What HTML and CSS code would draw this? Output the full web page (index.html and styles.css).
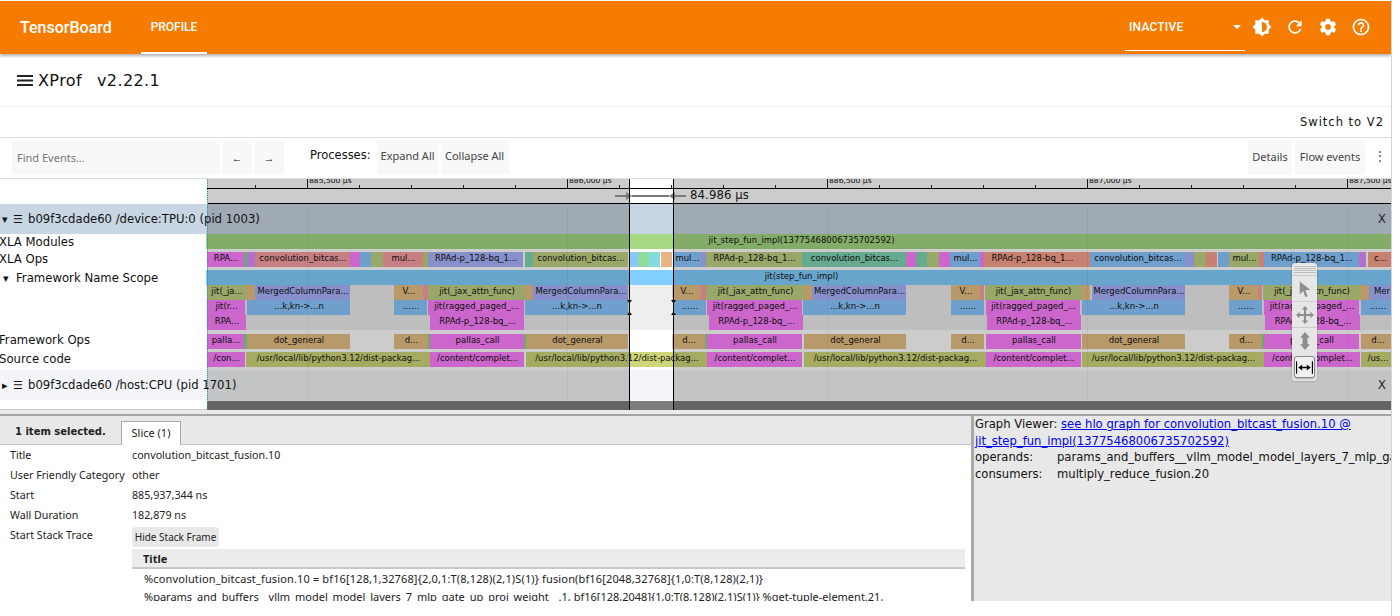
FILE: index.html
```html
<!DOCTYPE html>
<html lang="en">
<head>
<meta charset="utf-8">
<title>XProf</title>
<link rel="stylesheet" href="styles.css">
</head>
<body>
<div class="app">
  <header class="topbar">
    <span class="brand">TensorBoard</span>
    <span class="tab-active">PROFILE</span>
    <div class="run-select"><span>INACTIVE</span><i class="caret"></i></div>
    <div class="top-icons">
      <svg viewBox="0 0 24 24"><path fill-rule="evenodd" d="M20 15.31L23.31 12 20 8.69V4h-4.69L12 .69 8.69 4H4v4.69L.69 12 4 15.31V20h4.69L12 23.31 15.31 20H20v-4.69zM12 18V6c3.31 0 6 2.69 6 6s-2.69 6-6 6z"/></svg>
      <svg viewBox="0 0 24 24"><path d="M17.65 6.35C16.2 4.9 14.21 4 12 4c-4.42 0-7.99 3.58-7.99 8s3.57 8 7.99 8c3.73 0 6.84-2.55 7.73-6h-2.08c-.82 2.33-3.04 4-5.65 4-3.31 0-6-2.69-6-6s2.69-6 6-6c1.66 0 3.14.69 4.22 1.78L13 11h7V4l-2.35 2.35z"/></svg>
      <svg viewBox="0 0 24 24"><path d="M19.43 12.98c.04-.32.07-.64.07-.98s-.03-.66-.07-.98l2.11-1.65c.19-.15.24-.42.12-.64l-2-3.46c-.12-.22-.39-.3-.61-.22l-2.49 1c-.52-.4-1.08-.73-1.69-.98l-.38-2.65C14.46 2.18 14.25 2 14 2h-4c-.25 0-.46.18-.49.42l-.38 2.65c-.61.25-1.17.59-1.69.98l-2.49-1c-.23-.09-.49 0-.61.22l-2 3.46c-.13.22-.07.49.12.64l2.11 1.65c-.04.32-.07.65-.07.98s.03.66.07.98l-2.11 1.65c-.19.15-.24.42-.12.64l2 3.46c.12.22.39.3.61.22l2.49-1c.52.4 1.08.73 1.69.98l.38 2.65c.03.24.24.42.49.42h4c.25 0 .46-.18.49-.42l.38-2.65c.61-.25 1.17-.59 1.69-.98l2.49 1c.23.09.49 0 .61-.22l2-3.46c.12-.22.07-.49-.12-.64l-2.11-1.65zM12 15.5c-1.93 0-3.5-1.57-3.5-3.5s1.57-3.5 3.5-3.5 3.5 1.57 3.5 3.5-1.57 3.5-3.5 3.5z"/></svg>
      <svg viewBox="0 0 24 24"><path d="M11 18h2v-2h-2v2zm1-16C6.48 2 2 6.48 2 12s4.48 10 10 10 10-4.48 10-10S17.52 2 12 2zm0 18c-4.41 0-8-3.59-8-8s3.59-8 8-8 8 3.59 8 8-3.59 8-8 8zm0-14c-2.21 0-4 1.79-4 4h2c0-1.1.9-2 2-2s2 .9 2 2c0 2-3 1.75-3 5h2c0-2.25 3-2.5 3-5 0-2.21-1.79-4-4-4z"/></svg>
    </div>
  </header>

  <div class="title-row">
    <svg class="menu" viewBox="0 0 16 11"><path d="M0 0h16v2H0zM0 4.5h16v2H0zM0 9h16v2H0z"/></svg>
    <span class="app-name">XProf</span><span class="app-version">v2.22.1</span>
  </div>
  <div class="switch-row"><span>Switch to V2</span></div>

  <div class="tools">
    <div class="find">Find Events...</div>
    <div class="tbtn nav">←</div>
    <div class="tbtn nav">→</div>
    <span class="procs">Processes:</span>
    <div class="tbtn expand">Expand All</div>
    <div class="tbtn collapse">Collapse All</div>
    <div class="tbtn details">Details</div>
    <div class="tbtn flow">Flow events</div>
    <span class="more">⋮</span>
  </div>

  <section class="timeline">
    <div class="row ruler-row">
      <div class="lbl"></div>
      <div class="track ruler">
        <span class="rl" style="left:102px">885,500 µs</span>
        <span class="rl" style="left:362px">886,000 µs</span>
        <span class="rl" style="left:622px">886,500 µs</span>
        <span class="rl" style="left:882px">887,000 µs</span>
        <span class="rl" style="left:1142px">887,500 µs</span>
      </div>
    </div>
    <div class="row measure-row"><div class="lbl"></div><div class="track measure"></div></div>

    <div class="row proc">
      <div class="lbl plabel sel"><span class="tri">▾</span><span class="ham">☰</span><span class="pname">b09f3cdade60 /device:TPU:0 (pid 1003)</span></div>
      <div class="track ptrack sel"><span class="close">X</span></div>
    </div>

    <div class="row r18">
      <div class="lbl tl">XLA Modules</div>
      <div class="track">
        <div class="lvl"><div class="s mod" style="left:0;width:1190px">jit_step_fun_impl(13775468006735702592)</div></div>
      </div>
    </div>

    <div class="row r18">
      <div class="lbl tl tl-ops">XLA Ops</div>
      <div class="track">
        <div class="lvl">
          <div class="s mag" style="left:1px;width:37px">RPA...</div>
          <div class="s grn" style="left:38px;width:3px"></div>
          <div class="s pur2" style="left:41px;width:8px"></div>
          <div class="s pnk" style="left:49px;width:95px">convolution_bitcas...</div>
          <div class="s mag" style="left:144px;width:10px"></div>
          <div class="s blu" style="left:154px;width:11px"></div>
          <div class="s oli" style="left:165px;width:12px"></div>
          <div class="s pnk" style="left:177px;width:40px">mul...</div>
          <div class="s oli" style="left:217px;width:5px"></div>
          <div class="s pur" style="left:222px;width:95px">RPAd-p_128-bq_1...</div>
          <div class="s tea" style="left:319px;width:8px"></div>
          <div class="s oli" style="left:327px;width:95px">convolution_bitcas...</div>
          <div class="s blu" style="left:423px;width:9px"></div>
          <div class="s gr2" style="left:432px;width:11px"></div>
          <div class="s cya" style="left:443px;width:11px"></div>
          <div class="s org" style="left:455px;width:11px"></div>
          <div class="s blu" style="left:467px;width:28px">mul...</div>
          <div class="s pur" style="left:495px;width:5px"></div>
          <div class="s oli" style="left:500px;width:96px">RPAd-p_128-bq_1...</div>
          <div class="s tea" style="left:596px;width:104px">convolution_bitcas...</div>
          <div class="s mag" style="left:700px;width:10px"></div>
          <div class="s tea" style="left:710px;width:11px"></div>
          <div class="s oli" style="left:721px;width:12px"></div>
          <div class="s mag" style="left:733px;width:11px"></div>
          <div class="s blu" style="left:744px;width:30px">mul...</div>
          <div class="s mag" style="left:774px;width:4px"></div>
          <div class="s sal" style="left:778px;width:96px">RPAd-p_128-bq_1...</div>
          <div class="s sal" style="left:874px;width:10px"></div>
          <div class="s blu" style="left:884px;width:95px">convolution_bitcas...</div>
          <div class="s pur" style="left:979px;width:9px"></div>
          <div class="s oli" style="left:988px;width:12px"></div>
          <div class="s sal" style="left:1000px;width:11px"></div>
          <div class="s blu" style="left:1012px;width:11px"></div>
          <div class="s oli" style="left:1023px;width:30px">mul...</div>
          <div class="s sal" style="left:1053px;width:5px"></div>
          <div class="s blu" style="left:1058px;width:95px">RPAd-p_128-bq_1...</div>
          <div class="s pur2" style="left:1153px;width:7px"></div>
          <div class="s sal" style="left:1162px;width:24px">c...</div>
        </div>
      </div>
    </div>

    <div class="row scope">
      <div class="lbl tl"><span class="tri tri-scope">▾</span>Framework Name Scope</div>
      <div class="track">
        <div class="lvl"><div class="s sco" style="left:0;width:1190px">jit(step_fun_impl)</div></div>
        <div class="lvl">
          <div class="s oli" style="left:1px;width:39px">jit(_ja...</div>
          <div class="s tan" style="left:40px;width:9px"></div>
          <div class="s pur" style="left:49px;width:95px">MergedColumnPara...</div>
          <div class="s tan" style="left:188px;width:29px">V...</div>
          <div class="s pnk" style="left:217px;width:5px"></div>
          <div class="s oli" style="left:222px;width:97px">jit(_jax_attn_func)</div>
          <div class="s tan" style="left:319px;width:8px"></div>
          <div class="s pur" style="left:327px;width:95px">MergedColumnPara...</div>
          <div class="s tan" style="left:466px;width:29px">V...</div>
          <div class="s pnk" style="left:495px;width:5px"></div>
          <div class="s oli" style="left:500px;width:98px">jit(_jax_attn_func)</div>
          <div class="s tan" style="left:598px;width:8px"></div>
          <div class="s pur" style="left:606px;width:94px">MergedColumnPara...</div>
          <div class="s tan" style="left:745px;width:29px">V...</div>
          <div class="s pnk" style="left:774px;width:4px"></div>
          <div class="s oli" style="left:779px;width:96px">jit(_jax_attn_func)</div>
          <div class="s tan" style="left:875px;width:9px"></div>
          <div class="s pur" style="left:886px;width:93px">MergedColumnPara...</div>
          <div class="s tan" style="left:1023px;width:29px">V...</div>
          <div class="s pnk" style="left:1052px;width:4px"></div>
          <div class="s oli" style="left:1057px;width:97px">jit(_jax_attn_func)</div>
          <div class="s tan" style="left:1154px;width:9px"></div>
          <div class="s pur" style="left:1163px;width:25px">Mer</div>
        </div>
        <div class="lvl">
          <div class="s mag" style="left:1px;width:38px">jit(r...</div>
          <div class="s blu" style="left:41px;width:103px">...k,kn-&gt;...n</div>
          <div class="s blu" style="left:188px;width:33px">......</div>
          <div class="s mag" style="left:222px;width:96px">jit(ragged_paged_...</div>
          <div class="s blu" style="left:319px;width:103px">...k,kn-&gt;...n</div>
          <div class="s blu" style="left:467px;width:33px">......</div>
          <div class="s mag" style="left:501px;width:95px">jit(ragged_paged_...</div>
          <div class="s blu" style="left:597px;width:103px">...k,kn-&gt;...n</div>
          <div class="s blu" style="left:745px;width:33px">......</div>
          <div class="s mag" style="left:780px;width:94px">jit(ragged_paged_...</div>
          <div class="s blu" style="left:876px;width:103px">...k,kn-&gt;...n</div>
          <div class="s blu" style="left:1023px;width:33px">......</div>
          <div class="s mag" style="left:1058px;width:95px">jit(ragged_paged_...</div>
          <div class="s blu" style="left:1155px;width:33px">......</div>
        </div>
        <div class="lvl">
          <div class="s mag" style="left:1px;width:39px">RPA...</div>
          <div class="s mag" style="left:224px;width:94px">RPAd-p_128-bq_...</div>
          <div class="s mag" style="left:503px;width:94px">RPAd-p_128-bq_...</div>
          <div class="s mag" style="left:781px;width:94px">RPAd-p_128-bq_...</div>
          <div class="s mag" style="left:1059px;width:95px">RPAd-p_128-bq_...</div>
        </div>
      </div>
    </div>

    <div class="row r22">
      <div class="lbl tl tl-fw">Framework Ops</div>
      <div class="track pad4">
        <div class="lvl">
          <div class="s mag" style="left:1px;width:37px">palla...</div>
          <div class="s grn" style="left:38px;width:3px"></div>
          <div class="s tan" style="left:41px;width:103px">dot_general</div>
          <div class="s tan" style="left:188px;width:34px">d...</div>
          <div class="s grn" style="left:222px;width:2px"></div>
          <div class="s mag" style="left:224px;width:94px">pallas_call</div>
          <div class="s grn" style="left:318px;width:2px"></div>
          <div class="s tan" style="left:320px;width:102px">dot_general</div>
          <div class="s tan" style="left:466px;width:33px">d...</div>
          <div class="s grn" style="left:499px;width:2px"></div>
          <div class="s mag" style="left:501px;width:95px">pallas_call</div>
          <div class="s tan" style="left:598px;width:102px">dot_general</div>
          <div class="s tan" style="left:745px;width:33px">d...</div>
          <div class="s mag" style="left:780px;width:95px">pallas_call</div>
          <div class="s tan" style="left:876px;width:103px">dot_general</div>
          <div class="s tan" style="left:1023px;width:33px">d...</div>
          <div class="s grn" style="left:1056px;width:2px"></div>
          <div class="s mag" style="left:1058px;width:95px">pallas_call</div>
          <div class="s tan" style="left:1155px;width:33px">d...</div>
        </div>
      </div>
    </div>

    <div class="row r18">
      <div class="lbl tl tl-src">Source code</div>
      <div class="track">
        <div class="lvl">
          <div class="s mag" style="left:1px;width:38px">/con...</div>
          <div class="s src" style="left:40px;width:184px">/usr/local/lib/python3.12/dist-packag...</div>
          <div class="s mag" style="left:224px;width:94px">/content/complet...</div>
          <div class="s src" style="left:320px;width:181px">/usr/local/lib/python3.12/dist-packag...</div>
          <div class="s mag" style="left:501px;width:95px">/content/complet...</div>
          <div class="s src" style="left:598px;width:182px">/usr/local/lib/python3.12/dist-packag...</div>
          <div class="s mag" style="left:780px;width:95px">/content/complet...</div>
          <div class="s src" style="left:876px;width:182px">/usr/local/lib/python3.12/dist-packag...</div>
          <div class="s mag" style="left:1058px;width:96px">/content/complet...</div>
          <div class="s src" style="left:1155px;width:33px">/us...</div>
        </div>
      </div>
    </div>

    <div class="row proc">
      <div class="lbl plabel host"><span class="tri">▸</span><span class="ham">☰</span><span class="pname">b09f3cdade60 /host:CPU (pid 1701)</span></div>
      <div class="track ptrack host"><span class="close">X</span></div>
    </div>
    <div class="row tail"><div class="lbl"></div><div class="track"><div class="minimap"></div></div></div>

    <div class="grid"></div>
    <div class="dim dim-l"></div>
    <div class="dim dim-r"></div>
    <div class="dotted"></div>
    <div class="sel-line sel-a"></div>
    <div class="sel-line sel-b"></div>
    <svg class="arrows" viewBox="0 0 72 10"><path d="M0 4h11V1l6 4-6 4V6H0zM71 4H60V1l-6 4 6 4V6h11zM17 4h37v2H17z"/></svg>
    <span class="span-text">84.986 µs</span>
    <svg class="caps cap-a" viewBox="0 0 5 15"><path d="M0 0h5L2.900 3v9L5 15H0l2.100-3V3z"/></svg>
    <svg class="caps cap-b" viewBox="0 0 5 15"><path d="M0 0h5L2.900 3v9L5 15H0l2.100-3V3z"/></svg>

    <div class="modes">
      <div class="handle"></div>
      <div class="mode"><svg viewBox="0 0 20 24"><path d="M3 2l14 11-6.500 .5 3 8-3 1-3-8L3 19z"/></svg></div>
      <div class="mode"><svg viewBox="0 0 20 20"><path d="M10 0l3.500 4H11.200v4.800H16V6.500l4 3.500-4 3.500v-2.300h-4.800V16h2.300L10 20l-3.500-4h2.300v-4.800H4v2.300L0 10l4-3.500v2.300h4.800V4H6.500z"/></svg></div>
      <div class="mode"><svg viewBox="0 0 14 22"><path d="M7 0l6 7H10v8h3l-6 7-6-7h3V7H1z"/></svg></div>
      <div class="mode active"><svg viewBox="0 0 22 16"><path d="M0 0h1.500v16H0zM20.500 0H22v16h-1.500zM3 8l5-4v3h6V4l5 4-5 4V9H8v3z"/></svg></div>
    </div>
  </section>

  <div class="sep"></div>

  <section class="bottom">
    <div class="analysis">
      <div class="ahead">
        <b class="count">1 item selected.</b>
        <span class="slice-tab">Slice (1)</span>
      </div>
      <div class="props">
        <div class="prop"><span class="k">Title</span><span class="v">convolution_bitcast_fusion.10</span></div>
        <div class="prop"><span class="k">User Friendly Category</span><span class="v">other</span></div>
        <div class="prop"><span class="k">Start</span><span class="v">885,937,344 ns</span></div>
        <div class="prop"><span class="k">Wall Duration</span><span class="v">182,879 ns</span></div>
        <div class="prop"><span class="k">Start Stack Trace</span><span class="v"><span class="hide-btn">Hide Stack Frame</span></span></div>
        <div class="stack">
          <div class="stack-h">Title</div>
          <div class="stack-l first">%convolution_bitcast_fusion.10 = bf16[128,1,32768]{2,0,1:T(8,128)(2,1)S(1)} fusion(bf16[2048,32768]{1,0:T(8,128)(2,1)}</div>
          <div class="stack-l">%params_and_buffers__vllm_model_model_layers_7_mlp_gate_up_proj_weight__.1, bf16[128,2048]{1,0:T(8,128)(2,1)S(1)} %get-tuple-element.21,</div>
        </div>
      </div>
    </div>
    <aside class="graph">
      <div class="gline">Graph Viewer: <a href="#">see hlo graph for convolution_bitcast_fusion.10 @ jit_step_fun_impl(13775468006735702592)</a></div>
      <div class="gkv"><span>operands:</span><span>params_and_buffers__vllm_model_model_layers_7_mlp_gate_up_proj_weight__.1</span></div>
      <div class="gkv"><span>consumers:</span><span>multiply_reduce_fusion.20</span></div>
    </aside>
  </section>
</div>
</body>
</html>
```

FILE: styles.css
```css
* { box-sizing: border-box; }
html, body { margin: 0; padding: 0; background: #fff; overflow: hidden; }
body { font-family: "DejaVu Sans", sans-serif; color: #111; height: 616px; }
.app { width: 1392px; height: 616px; border-right: 1px solid #d4d4d4; padding-top: 1px; display: flex; flex-direction: column; overflow: hidden; }

/* top bar */
.topbar { height: 53px; flex: none; background: #f57c00; color: #fff; display: flex; align-items: center; font-family: Roboto, sans-serif; box-shadow: 0 2px 3px rgba(0,0,0,.3); position: relative; z-index: 5; }
.brand { margin-left: 20px; font-size: 16px; font-weight: 500; width: 121px; }
.tab-active { width: 66px; height: 53px; line-height: 52px; text-align: center; font-size: 12px; font-weight: 500; border-bottom: 2px solid #fff; }
.run-select { margin-left: auto; width: 120px; height: 50px; padding: 2px 4px 0; display: flex; align-items: center; justify-content: space-between; font-size: 12px; font-weight: 500; letter-spacing: .2px; border-bottom: 1px solid #fff; align-self: flex-start; line-height: 50px; }
.caret { width: 0; height: 0; border-left: 4px solid transparent; border-right: 4px solid transparent; border-top: 4px solid #fff; }
.top-icons { display: flex; gap: 13px; margin-left: 7px; margin-right: 20px; align-self: flex-start; margin-top: 16px; }
.top-icons svg { width: 20px; height: 20px; fill: #fff; display: block; }

/* title rows */
.title-row { height: 53px; flex: none; border-bottom: 1px solid #f0f0f0; display: flex; align-items: center; padding-left: 17px; font-size: 16px; letter-spacing: .4px; padding-top: 1px; }
.menu { width: 16px; height: 11px; fill: #222; margin-right: 5px; }
.app-version { margin-left: 15px; }
.switch-row { height: 31px; flex: none; border-bottom: 1px solid #ddd; display: flex; align-items: center; justify-content: flex-end; padding-right: 7px; font-size: 11.500px; letter-spacing: 1px; }

.tools { height: 41px; flex: none; display: flex; align-items: flex-start; font-family: "Noto Sans", sans-serif; font-size: 11px; color: #444; border-bottom: 1px solid #ddd; }
.find { width: 208px; height: 33px; margin: 3px 0 0 12px; background: #f8f8f8; color: #777; line-height: 33px; padding-left: 5px; }
.tbtn { background: #f8f8f8; height: 34px; margin-top: 2px; line-height: 31px; text-align: center; }
.nav { width: 30px; margin: 3px 0 0 2px; height: 33px; color: #222; line-height: 33px; }
.procs { margin: 9px 0 0 26px; font-family: "DejaVu Sans", sans-serif; font-size: 11.500px; line-height: 16px; color: #111; }
.expand { width: 62px; margin-left: 6px; }
.collapse { width: 68px; margin-left: 2px; }
.details { width: 44px; margin-left: auto; height: 35px; line-height: 33px; }
.flow { width: 70px; margin-left: 3px; height: 35px; line-height: 33px; }
.more { width: 26px; margin-top: 10px; padding-left: 4px; text-align: center; font-size: 12px; line-height: 16px; }

/* timeline */
.timeline { position: relative; height: 231px; flex: none; overflow: hidden; }
.row { display: flex; }
.lbl { width: 207px; flex: none; position: relative; z-index: 3; white-space: nowrap; }
.track { flex: 1; position: relative; min-width: 0; }
.ruler-row { height: 10px; }
.ruler { border-bottom: 1px solid #000; overflow: hidden; background:
  linear-gradient(90deg, transparent 100px, #222 100px 101px, transparent 101px) 0 0 / 260px 100% repeat-x,
  linear-gradient(90deg, transparent 48px, #222 48px 49px, transparent 49px) 0 100% / 52px 3px repeat-x; }
.rl { position: absolute; top: -3px; font-size: 7.600px; line-height: 10px; color: #111; white-space: nowrap; }
.measure-row { height: 15px; }
.measure { border-bottom: 1px solid #000; }
.proc { height: 30px; }
.plabel { display: flex; align-items: center; font-size: 11.650px; }
.tri { font-size: 11px; width: 13px; padding-left: 2px; flex: none; }
.ham { width: 15px; flex: none; font-size: 11px; }
.sel { background: #c8d5e3; }
.host { background: #f3f5f8; }
.ptrack { display: flex; align-items: center; justify-content: flex-end; padding-right: 5px; }
.close { font-size: 12px; color: #333; }
.r18 { height: 18px; }
.r22 { height: 22px; }
.scope { height: 60px; }
.scope .track { background: #eee; }
.pad4 { padding-top: 4px; }
.tl { font-size: 11.700px; line-height: 14px; margin-left: -1px; padding-top: 1px; }
.tl-ops { margin-top: -1px; }
.tl-fw { padding-top: 3px; }
.tl-src { padding-top: 0; }
.tri-scope { display: inline-block; padding-left: 4px; width: 17px; }
.lvl { position: relative; height: 15px; }
.s { position: absolute; top: 0; height: 15px; font-size: 8.500px; line-height: 12px; text-align: center; text-indent: 1px; overflow: hidden; white-space: nowrap; color: #111; }
.mod { background: #a6d884; }
.sco { background: #82cfff; }
.mag { background: #ff80ff; }
.pnk { background: #fb9fa6; }
.oli { background: #c0d284; }
.blu { background: #8bc7ff; }
.pur { background: #aab4ff; }
.pur2 { background: #dc8cff; }
.tea { background: #80d5b4; }
.grn { background: #80d890; }
.gr2 { background: #90dc9c; }
.cya { background: #80dce0; }
.org { background: #e8b482; }
.tan { background: #e6c085; }
.sal { background: #faa08c; }
.src { background: #cfd67a; }
.tail { height: 10px; }
.tail .lbl { border-bottom: 1px solid #ccc; }
.minimap { height: 9px; margin-top: 1px; background: #7d7d7d; }

/* overlays on the timeline canvas */
.grid { position: absolute; left: 207px; right: 0; top: 25px; height: 196px; z-index: 1; background: linear-gradient(90deg, transparent 100px, rgba(0,0,0,.05) 100px 101px, transparent 101px) 0 0 / 260px 100% repeat-x; }
.dim { position: absolute; top: 0; bottom: 0; background: rgba(0,0,0,.2); z-index: 2; }
.dim-l { left: 207px; width: 423px; }
.dim-r { left: 673px; right: 0; }
.dotted { position: absolute; left: 207px; top: 0; bottom: 0; border-left: 1px dotted #2a8fb0; z-index: 4; }
.sel-line { position: absolute; top: 0; bottom: 0; width: 1px; background: #000; z-index: 4; }
.sel-a { left: 629px; }
.sel-b { left: 673px; }
.arrows { position: absolute; left: 615px; top: 12px; width: 72px; height: 10px; fill: #7a7a7a; z-index: 3; }
.span-text { position: absolute; left: 690px; top: 8px; font-size: 11.700px; line-height: 16px; color: #111; letter-spacing: .1px; z-index: 4; }
.caps { position: absolute; top: 121px; width: 5px; height: 15px; fill: #111; z-index: 4; }
.cap-a { left: 627px; }
.cap-b { left: 671px; }

.modes { position: absolute; left: 1292px; top: 84px; width: 25px; height: 118px; background: #e6e6e6; border-radius: 3px; box-shadow: 0 0 2px rgba(0,0,0,.35); z-index: 6; display: flex; flex-direction: column; align-items: center; padding: 2px 0; }
.handle { width: 22px; height: 8px; flex: none; background: repeating-linear-gradient(0deg, #bbb 0 1px, #eee 1px 2px); margin-bottom: 2px; }
.mode { width: 100%; height: 26px; flex: none; border-top: 1px solid #ccc; display: flex; align-items: center; justify-content: center; }
.mode svg { width: 18px; height: 18px; fill: #8e8e8e; }
.mode.active { width: 21px; height: 22px; margin-top: 3px; border: 1px solid #888; border-radius: 3px; background: #f0f0f0; box-shadow: 0 1px 2px rgba(0,0,0,.25); }
.mode.active svg { width: 17px; height: 13px; fill: #000; }

.sep { height: 6px; flex: none; background: #ebebeb; border-bottom: 2px solid #a4a4a4; }

/* bottom */
.bottom { height: 185px; flex: none; display: flex; }
.analysis { width: 971px; flex: none; font-family: "Noto Sans", sans-serif; font-size: 10.700px; color: #222; overflow: hidden; }
.ahead { height: 29px; background: #e8e8e8; border-bottom: 1px solid #c4c4c4; display: flex; align-items: flex-end; }
.count { font-family: "DejaVu Sans", sans-serif; font-size: 10px; margin-left: 15px; width: 106px; line-height: 26px; align-self: flex-start; padding-top: 3px; }
.slice-tab { width: 60px; height: 24px; background: #fff; border: 1px solid #aaa; border-bottom: 0; text-align: center; line-height: 21px; margin-bottom: -1px; font-size: 11px; }
.props { padding-left: 10px; }
.prop { display: flex; height: 20px; line-height: 20px; }
.k { width: 122px; flex: none; }
.hide-btn { display: block; width: 87px; height: 20px; background: #e8e8e8; border-radius: 4px; text-align: center; margin-top: 2px; line-height: 20px; font-size: 10px; white-space: nowrap; }
.stack { margin: 4px 6px 0 122px; font-size: 11px; }
.stack-h { height: 20px; background: #ececec; border-bottom: 2px solid #c8c8c8; padding-left: 11px; font-weight: 700; line-height: 19px; }
.stack-l { height: 17px; padding-left: 12px; line-height: 17px; white-space: nowrap; }
.stack-l.first { margin-top: 1px; height: 18px; letter-spacing: .14px; }
.graph { width: 420px; flex: none; background: #e8e8e8; border-left: 3px solid #a8a8a8; font-size: 11.600px; line-height: 16.500px; overflow: hidden; }
.gline { padding: 0 30px 0 1px; }
.gline a { color: #0000ee; text-decoration: underline; }
.gkv { display: flex; white-space: nowrap; padding-left: 1px; }
.gkv span:first-child { width: 82px; flex: none; }
```
